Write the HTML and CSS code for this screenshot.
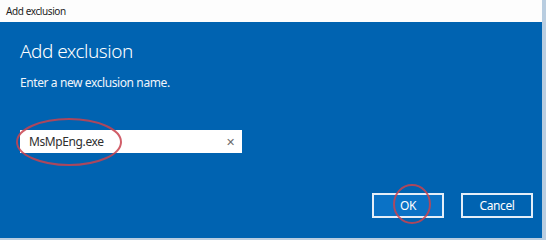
FILE: index.html
```html
<!DOCTYPE html>
<html lang="en">
  <head>
    <meta charset="UTF-8" />
    <title>Add exclusion</title>
    <link rel="stylesheet" href="styles.css">
  </head>
  <body>
    <div class="window">
      <div class="title-bar">
        <div class="title-text">Add exclusion</div>
      </div>

      <div class="content">
        <h1 class="heading">Add exclusion</h1>
        <p class="hint">Enter a new exclusion name.</p>

        <div class="field">
          <span class="field-value">MsMpEng.exe</span>
          <span class="clear-button">✕</span>
          <svg class="mark mark-field" width="110" height="52" viewBox="0 0 110 52">
            <ellipse cx="55" cy="26" rx="52" ry="23" />
          </svg>
        </div>

        <div class="buttons">
          <button type="button" class="btn btn-ok">
            OK
            <svg class="mark mark-ok" width="42" height="42" viewBox="0 0 42 42">
              <ellipse cx="21" cy="21" rx="18" ry="19" />
            </svg>
          </button>
          <button type="button" class="btn btn-cancel">Cancel</button>
        </div>
      </div>
    </div>
  </body>
</html>
```

FILE: styles.css
```css
body {
  margin: 0;
  background: #b9cde0;
  font-family: "Noto Sans", "Open Sans", sans-serif;
  width: 546px;
  height: 240px;
  overflow: hidden;
}

.window {
  width: 542px;
  height: 238px;
  display: flex;
  flex-direction: column;
}

.title-bar {
  height: 22px;
  background: #fdfdfd;
  display: flex;
  align-items: center;
  padding: 0 6px;
  box-sizing: border-box;
}

.title-text {
  font-size: 10px;
  letter-spacing: -0.4px;
  color: #1e1e1e;
}

.content {
  flex: 1;
  background: #0063b1;
  padding: 16px 0 0 20px;
  display: flex;
  flex-direction: column;
  color: #fff;
}

.heading {
  margin: 0;
  font-size: 19px;
  font-weight: 300;
  letter-spacing: -0.5px;
  line-height: 26px;
}

.hint {
  margin: 10px 0 0 0;
  font-size: 12px;
  letter-spacing: -0.4px;
  line-height: 18px;
  color: #f0f5fb;
}

.field {
  position: relative;
  margin-top: 38px;
  width: 222px;
  height: 23px;
  background: #fff;
  display: flex;
  align-items: center;
  justify-content: space-between;
  padding: 0 7px 0 9px;
  box-sizing: border-box;
}

.field-value {
  font-size: 12px;
  letter-spacing: -0.4px;
  color: #2e2e2e;
}

.clear-button {
  font-size: 11px;
  color: #6d6d6d;
}

.mark {
  position: absolute;
  fill: none;
  stroke: #c9434f;
  stroke-width: 2;
  opacity: 0.85;
}

.mark-field {
  left: -6px;
  top: -14px;
}

.buttons {
  margin-top: auto;
  margin-bottom: 20px;
  margin-right: 9px;
  display: flex;
  justify-content: flex-end;
  gap: 17px;
}

.btn {
  position: relative;
  width: 72px;
  height: 25px;
  border: 2px solid #e4eef8;
  color: #fff;
  font-family: inherit;
  font-size: 12px;
  letter-spacing: -0.4px;
  padding: 0;
}

.btn-ok {
  background: #0a72c6;
}

.btn-cancel {
  background: #0063b1;
}

.mark-ok {
  left: 17px;
  top: -12px;
}
```
